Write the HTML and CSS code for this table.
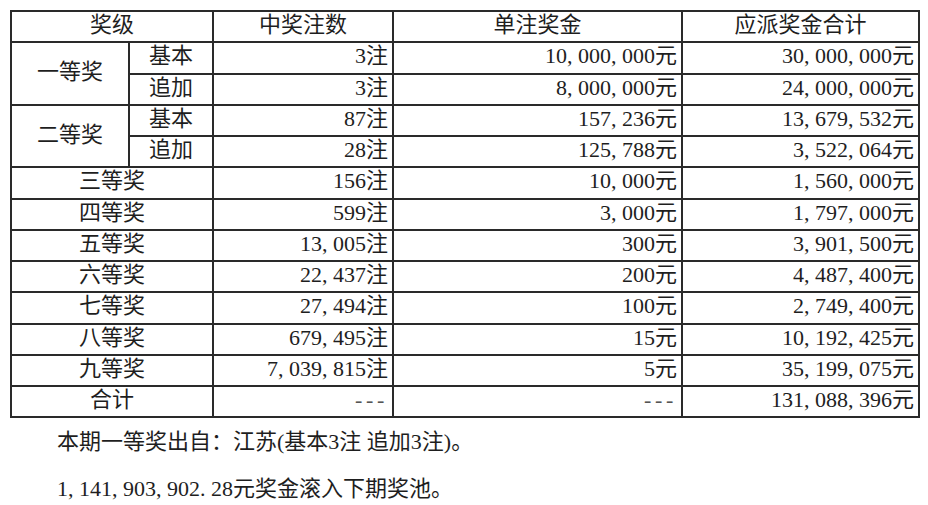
FILE: index.html
```html
<!DOCTYPE html>
<html lang="zh-CN">
<head>
<meta charset="utf-8">
<title>开奖公告</title>
<link rel="stylesheet" href="styles.css">
</head>
<body>
<div class="page">
  <table class="prize">
    <colgroup>
      <col class="c1"><col class="c2"><col class="c3"><col class="c4"><col class="c5">
    </colgroup>
    <thead>
      <tr><th colspan="2">奖级</th><th>中奖注数</th><th>单注奖金</th><th>应派奖金合计</th></tr>
    </thead>
    <tbody>
      <tr><td rowspan="2" class="ctr lvl">一等奖</td><td class="ctr">基本</td><td class="num">3注</td><td class="num">10<span class="p">,</span>000<span class="p">,</span>000元</td><td class="num">30<span class="p">,</span>000<span class="p">,</span>000元</td></tr>
      <tr><td class="ctr">追加</td><td class="num">3注</td><td class="num">8<span class="p">,</span>000<span class="p">,</span>000元</td><td class="num">24<span class="p">,</span>000<span class="p">,</span>000元</td></tr>
      <tr><td rowspan="2" class="ctr lvl">二等奖</td><td class="ctr">基本</td><td class="num">87注</td><td class="num">157<span class="p">,</span>236元</td><td class="num">13<span class="p">,</span>679<span class="p">,</span>532元</td></tr>
      <tr><td class="ctr">追加</td><td class="num">28注</td><td class="num">125<span class="p">,</span>788元</td><td class="num">3<span class="p">,</span>522<span class="p">,</span>064元</td></tr>
      <tr><td colspan="2" class="ctr">三等奖</td><td class="num">156注</td><td class="num">10<span class="p">,</span>000元</td><td class="num">1<span class="p">,</span>560<span class="p">,</span>000元</td></tr>
      <tr><td colspan="2" class="ctr">四等奖</td><td class="num">599注</td><td class="num">3<span class="p">,</span>000元</td><td class="num">1<span class="p">,</span>797<span class="p">,</span>000元</td></tr>
      <tr><td colspan="2" class="ctr">五等奖</td><td class="num">13<span class="p">,</span>005注</td><td class="num">300元</td><td class="num">3<span class="p">,</span>901<span class="p">,</span>500元</td></tr>
      <tr><td colspan="2" class="ctr">六等奖</td><td class="num">22<span class="p">,</span>437注</td><td class="num">200元</td><td class="num">4<span class="p">,</span>487<span class="p">,</span>400元</td></tr>
      <tr><td colspan="2" class="ctr">七等奖</td><td class="num">27<span class="p">,</span>494注</td><td class="num">100元</td><td class="num">2<span class="p">,</span>749<span class="p">,</span>400元</td></tr>
      <tr><td colspan="2" class="ctr">八等奖</td><td class="num">679<span class="p">,</span>495注</td><td class="num">15元</td><td class="num">10<span class="p">,</span>192<span class="p">,</span>425元</td></tr>
      <tr><td colspan="2" class="ctr">九等奖</td><td class="num">7<span class="p">,</span>039<span class="p">,</span>815注</td><td class="num">5元</td><td class="num">35<span class="p">,</span>199<span class="p">,</span>075元</td></tr>
      <tr><td colspan="2" class="ctr">合计</td><td class="num"><span class="dash">---</span></td><td class="num"><span class="dash">---</span></td><td class="num">131<span class="p">,</span>088<span class="p">,</span>396元</td></tr>
    </tbody>
  </table>
  <p class="note">本期一等奖出自：江苏(基本3注 追加3注)。</p>
  <p class="note">1<span class="p">,</span>141<span class="p">,</span>903<span class="p">,</span>902<span class="p">.</span>28元奖金滚入下期奖池。</p>
</div>
</body>
</html>
```

FILE: styles.css
```css
html, body {
  margin: 0;
  padding: 0;
  background: #ffffff;
}

body {
  font-family: "Liberation Serif", "Noto Sans CJK SC", serif;
  font-size: 22px;
  color: #1e1e1e;
}

.page {
  padding: 10px 0 0 10px;
}

.prize {
  border-collapse: collapse;
  table-layout: fixed;
  width: 908px;
}

.c1 { width: 118px; }
.c2 { width: 84px; }
.c3 { width: 180px; }
.c4 { width: 289px; }
.c5 { width: 237px; }

.prize th,
.prize td {
  border: 2px solid #2a2a2a;
  height: 31.25px;
  padding: 0 4px 3px 4px;
  box-sizing: border-box;
  line-height: 26px;
  font-weight: normal;
  white-space: nowrap;
  vertical-align: middle;
}

.prize th {
  text-align: center;
}

.ctr {
  text-align: center;
}

.lvl {
  padding-right: 8px;
}

.num {
  text-align: right;
  padding-right: 5px;
}

.p {
  letter-spacing: 5.5px;
}

.dash {
  letter-spacing: 3.7px;
  color: #555;
}

.note {
  margin: 0;
  padding-left: 47px;
  line-height: 47px;
}
```
